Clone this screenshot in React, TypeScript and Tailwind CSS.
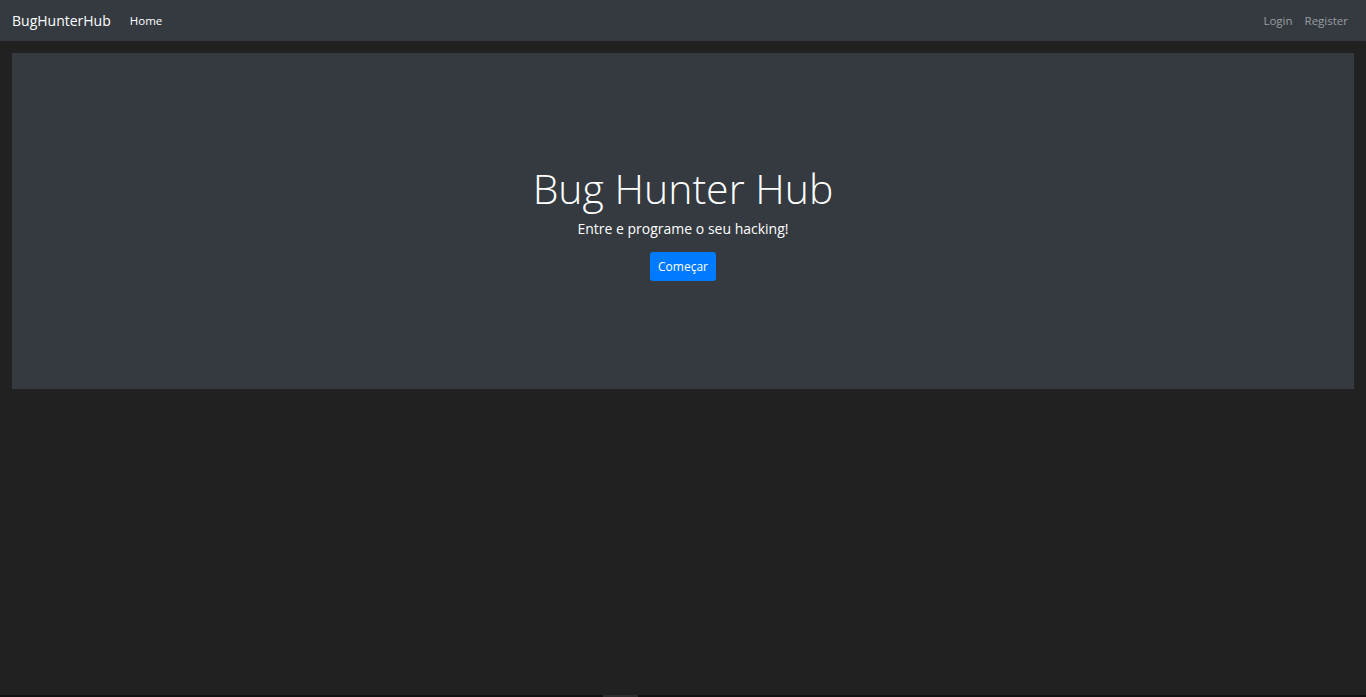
export default function App() {
  return (
    <div
      className="min-h-[697px] bg-[#212121] text-white flex flex-col"
      style={{ fontFamily: '"Open Sans", "Noto Sans", sans-serif' }}
    >
      <nav className="h-[41px] bg-[#343a40] flex items-center justify-between px-3">
        <div className="flex items-center">
          <a className="text-[14px] text-white mr-[19px]">BugHunterHub</a>
          <a className="text-[11.5px] text-white">Home</a>
        </div>
        <div className="flex items-center gap-3 pr-[6px]">
          <a className="text-[11.5px] text-[#9a9da1]">Login</a>
          <a className="text-[11.5px] text-[#9a9da1]">Register</a>
        </div>
      </nav>

      <div className="p-3">
        <section className="h-[336px] bg-[#343a40] flex flex-col items-center justify-center pb-[3px]">
          <h1 className="text-[41px] leading-[60px] font-light">Bug Hunter Hub</h1>
          <p className="text-[14px] leading-[22px] mb-[12px]">Entre e programe o seu hacking!</p>
          <button className="bg-[#007bff] text-white text-[12px] h-[29px] w-[66px] rounded-[3px]">
            Começar
          </button>
        </section>
      </div>

      <div className="flex-1" />
      <div className="h-[2px] bg-[#111] flex">
        <div className="w-[35px] bg-[#2d2d2d] ml-[603px]" />
      </div>
    </div>
  )
}
